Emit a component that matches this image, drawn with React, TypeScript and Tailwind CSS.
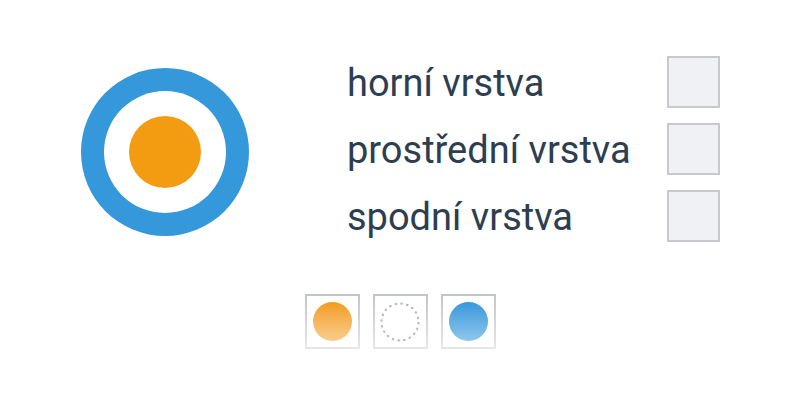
import React from "react";

const rows = ["horní vrstva", "prostřední vrstva", "spodní vrstva"];

export default function App() {
  return (
    <div className="w-[800px] h-[400px] bg-white flex flex-col" style={{ fontFamily: "Roboto, 'Noto Sans', sans-serif" }}>
      <div className="flex items-start pt-[56px] pl-[81px]">
        <div className="mt-[12px] w-[168px] h-[168px] rounded-full bg-[#3498db] flex items-center justify-center">
          <div className="w-[122px] h-[122px] rounded-full bg-white flex items-center justify-center">
            <div className="w-[72px] h-[72px] rounded-full bg-[#f39c12]" />
          </div>
        </div>
        <div className="ml-[98px] w-[373px] flex flex-col gap-[15px]">
          {rows.map((r) => (
            <div key={r} className="h-[52px] flex items-center justify-between">
              <span className="text-[38px] leading-none text-[#2c3e50] translate-y-[1px]">{r}</span>
              <div className="w-[53px] h-[52px] border-2 border-[#c6cacd] bg-[#f0f1f5]" />
            </div>
          ))}
        </div>
      </div>
      <div className="mt-[52px] flex justify-center gap-[13px]">
        {[
          <div key="o" className="w-[39px] h-[39px] rounded-full bg-gradient-to-b from-[#f39c12] to-[#f8cd8a]" />,
          <svg key="m" width="40" height="40" viewBox="0 0 40 40">
            <circle cx="20" cy="20" r="18.5" fill="none" stroke="#b9b9b9" strokeWidth="2" strokeDasharray="2.4 3.4" />
          </svg>,
          <div key="b" className="w-[39px] h-[39px] rounded-full bg-gradient-to-b from-[#3498db] to-[#8ec6ec]" />,
        ].map((c, i) => (
          <div key={i} className="w-[55px] h-[55px] p-[2px] bg-gradient-to-b from-[#c2c5c8] to-[#e6e7e8]">
            <div className="w-full h-full bg-white flex items-center justify-center">{c}</div>
          </div>
        ))}
      </div>
    </div>
  );
}
